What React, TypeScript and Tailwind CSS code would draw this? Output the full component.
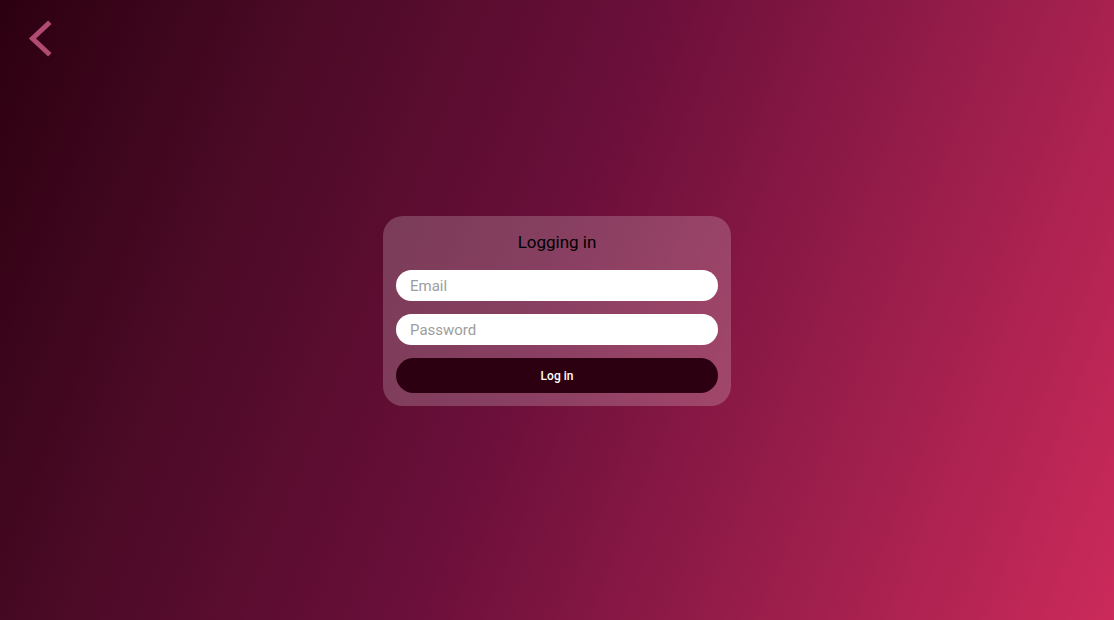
export default function App() {
  return (
    <div
      className="relative flex h-[620px] w-full items-center justify-center bg-[linear-gradient(112deg,#2c0010_0%,#4a0a25_22%,#6a0f3a_48%,#9c1e4b_75%,#cb2a5b_100%)] font-['Roboto',sans-serif]"
    >
      {/* back */}
      <button className="absolute left-[24px] top-[18px]">
        <svg width="30" height="40" viewBox="0 0 30 40" fill="none">
          <polyline
            points="24,6 8.5,20.5 24,35"
            stroke="#b24b72"
            strokeWidth="5"
            strokeLinecap="square"
            strokeLinejoin="miter"
          />
        </svg>
      </button>

      <div className="mt-[2px] flex w-[348px] flex-col rounded-[20px] bg-white/20 px-[13px] pb-[13px] pt-[15px]">
        <h1 className="text-center text-[17px] leading-[22px] text-black">Logging in</h1>
        <input
          type="email"
          placeholder="Email"
          className="mt-[17px] h-[31px] rounded-full bg-white px-[14px] text-[15px] text-gray-800 outline-none placeholder:text-[#9d9d9d]"
        />
        <input
          type="password"
          placeholder="Password"
          className="mt-[13px] h-[31px] rounded-full bg-white px-[14px] text-[15px] text-gray-800 outline-none placeholder:text-[#9d9d9d]"
        />
        <button className="mt-[13px] h-[35px] rounded-full bg-[#2c0010] text-[12px] font-medium text-white">
          Log in
        </button>
      </div>
    </div>
  );
}
